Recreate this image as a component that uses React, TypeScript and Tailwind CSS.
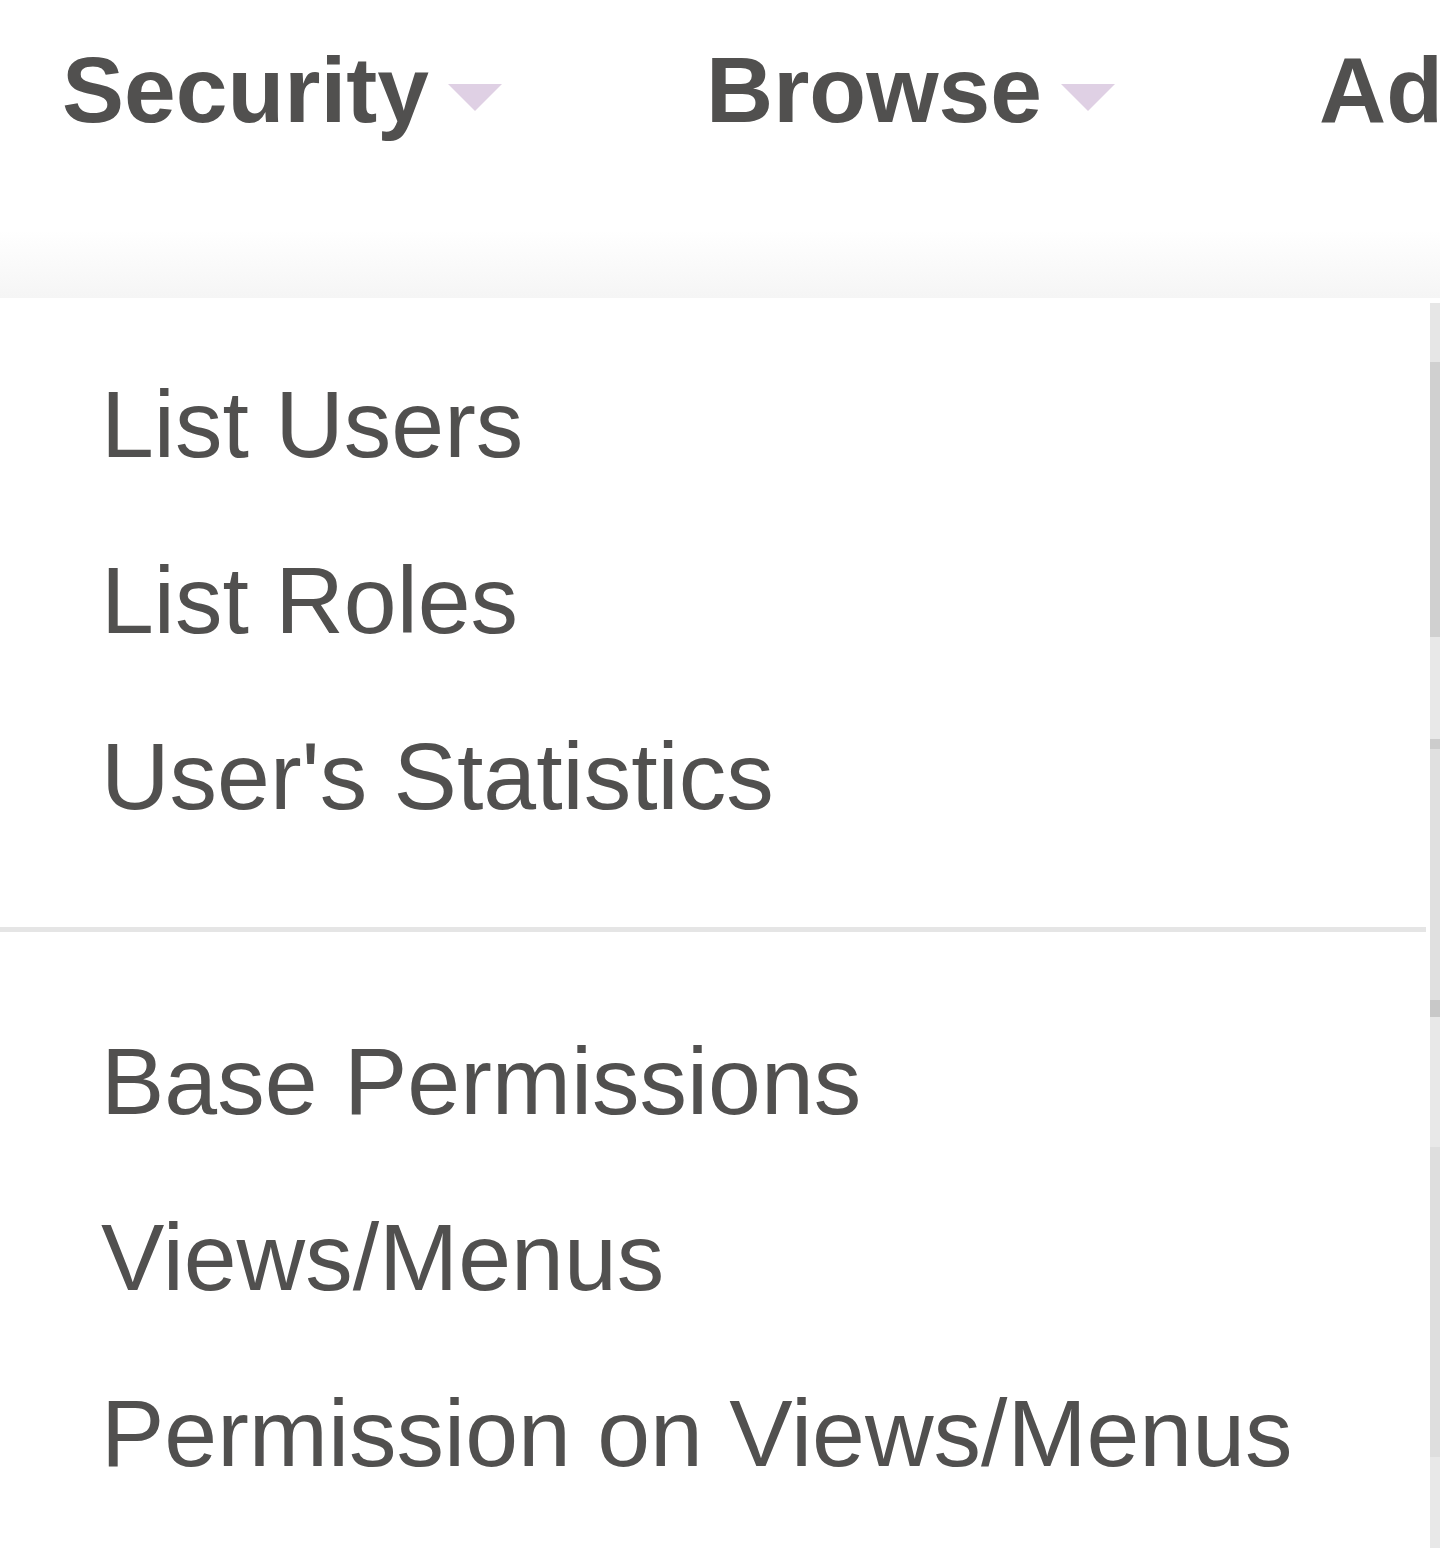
const navItems = [
  { label: "Security", caret: true },
  { label: "Browse", caret: true },
  { label: "Admin", caret: true },
];

const menuGroups = [
  ["List Users", "List Roles", "User's Statistics"],
  ["Base Permissions", "Views/Menus", "Permission on Views/Menus"],
];

// right edge of the dropdown (border / shadow, blurry in the capture)
const edge = [
  { h: "h-[59px]", c: "bg-[#e6e6e6]" },
  { h: "h-[275px]", c: "bg-[#d0d0d0]" },
  { h: "h-[102px]", c: "bg-[#e8e8e8]" },
  { h: "h-[10px]", c: "bg-[#cccccc]" },
  { h: "h-[251px]", c: "bg-[#e0e0e0]" },
  { h: "h-[17px]", c: "bg-[#c8c8c8]" },
  { h: "h-[130px]", c: "bg-[#e8e8e8]" },
  { h: "h-[310px]", c: "bg-[#dedede]" },
  { h: "h-[91px]", c: "bg-[#e8e8e8]" },
];

export default function App() {
  return (
    <div className="w-[1440px] h-[1548px] overflow-hidden bg-white text-[#51504f] font-['Liberation_Sans',Arial,sans-serif]">
      {/* Navbar */}
      <div className="h-[230px] pt-[23px] pl-[62px] flex gap-[204px]">
        {navItems.map((item) => (
          <div
            key={item.label}
            className="shrink-0 whitespace-nowrap text-[93px] leading-[134px] font-bold"
          >
            {item.label}
            {item.caret && (
              <span className="inline-block ml-[19px] align-middle w-0 h-0 border-t-[27px] border-t-[#dfd0e4] border-x-[27px] border-x-transparent" />
            )}
          </div>
        ))}
      </div>
      <div className="h-[68px] bg-linear-to-b from-white to-[#f5f5f5]" />

      {/* Dropdown */}
      <div className="flex">
        <div className="flex-1 pt-[38px]">
          {menuGroups.map((group, gi) => (
            <div key={gi}>
              {gi > 0 && (
                <div className="mt-[63px] mb-[61px] mr-[4px] h-[5px] bg-[#e5e5e5]" />
              )}
              {group.map((label) => (
                <div
                  key={label}
                  className="pl-[101px] py-[20px] text-[95px] leading-[136px] whitespace-nowrap"
                >
                  {label}
                </div>
              ))}
            </div>
          ))}
        </div>
        <div className="w-[10px] pt-[5px] flex flex-col">
          {edge.map((s, i) => (
            <div key={i} className={`${s.h} ${s.c}`} />
          ))}
        </div>
      </div>
    </div>
  );
}
